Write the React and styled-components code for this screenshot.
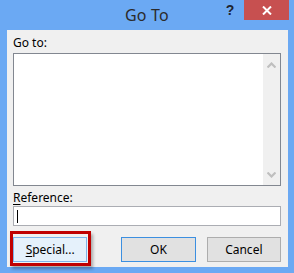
import React from "react";
import styled, { createGlobalStyle } from "styled-components";

const Global = createGlobalStyle`
  html, body { margin: 0; padding: 0; background: #6ba9f3; }
  body { font-family: "Noto Sans", "Open Sans", sans-serif; }
`;

const Window = styled.div`
  width: 294px;
  height: 273px;
  box-sizing: border-box;
  background: #6ba9f3;
  display: flex;
  flex-direction: column;
  padding: 0 6px 6px 7px;
`;

const TitleBar = styled.div`
  height: 30px;
  margin: 0 -6px 0 -7px;
  display: grid;
  grid-template-columns: 1fr auto 1fr;
  align-items: start;
`;

const Title = styled.div`
  grid-column: 2;
  font-size: 16px;
  line-height: 30px;
  color: #2b2b2b;
  letter-spacing: 0.2px;
`;

const Controls = styled.div`
  grid-column: 3;
  justify-self: end;
  display: flex;
  margin-right: 5px;
`;

const HelpButton = styled.div`
  width: 28px;
  height: 20px;
  display: flex;
  align-items: center;
  justify-content: center;
  font-family: "Liberation Sans", Arial, sans-serif;
  font-weight: bold;
  font-size: 14px;
  color: #1e2430;
`;

const CloseButton = styled.div`
  width: 45px;
  height: 20px;
  background: #c75050;
  display: flex;
  align-items: center;
  justify-content: center;
`;

const Content = styled.div`
  flex: 1;
  background: #f0f0f0;
  display: flex;
  flex-direction: column;
  padding: 5px 7px 0 6px;
  font-size: 12px;
  color: #000;
`;

const Label = styled.div`
  line-height: 15px;
  height: 15px;
  margin-top: ${(p) => p.$top || 0}px;
  margin-bottom: ${(p) => p.$bottom || 0}px;
`;

const Access = styled.span`
  text-decoration: underline;
  text-underline-offset: 2px;
`;

const ListBox = styled.div`
  height: 133px;
  box-sizing: border-box;
  border: 1px solid #828790;
  background: #fff;
  display: flex;
  justify-content: flex-end;
`;

const ScrollBar = styled.div`
  width: 17px;
  background: #f0f0f0;
  display: flex;
  flex-direction: column;
  justify-content: space-between;
  align-items: center;
  padding: 8px 0 7px;
`;

const Input = styled.div`
  height: 20px;
  box-sizing: border-box;
  border: 1px solid #abadb3;
  background: #fff;
  display: flex;
  align-items: center;
  padding-left: 3px;
`;

const Caret = styled.div`
  width: 1px;
  height: 13px;
  background: #000;
`;

const ButtonRow = styled.div`
  margin-top: 11px;
  display: flex;
  align-items: center;
`;

const Button = styled.div`
  position: relative;
  width: 75px;
  height: 25px;
  box-sizing: border-box;
  border: 1px solid ${(p) => (p.$focus ? "#7eb4ea" : p.$default ? "#3c8fe0" : "#adadad")};
  background: ${(p) => (p.$focus ? "#e5f1fb" : "#e1e1e1")};
  display: flex;
  align-items: center;
  justify-content: center;
  margin-left: ${(p) => p.$ml || 0}px;
`;

const Highlight = styled.div`
  position: absolute;
  left: -4px;
  right: -5px;
  top: -7px;
  bottom: -5px;
  border: 3px solid #c00000;
  box-shadow: 2px 3px 3px rgba(0, 0, 0, 0.3);
  pointer-events: none;
`;

const Chevron = ({ up }) => (
  <svg width="9" height="6" viewBox="0 0 9 6">
    <path
      d={up ? "M0.5 5.5 L4.5 1.5 L8.5 5.5" : "M0.5 0.5 L4.5 4.5 L8.5 0.5"}
      fill="none"
      stroke="#bfbfbf"
      strokeWidth="2.2"
    />
  </svg>
);

export default function App() {
  return (
    <>
      <Global />
      <Window>
        <TitleBar>
          <Title>Go To</Title>
          <Controls>
            <HelpButton>?</HelpButton>
            <CloseButton>
              <svg width="10" height="9" viewBox="0 0 10 9">
                <path d="M1 0.5 L9 8.5 M9 0.5 L1 8.5" stroke="#fff" strokeWidth="2" />
              </svg>
            </CloseButton>
          </Controls>
        </TitleBar>
        <Content>
          <Label $bottom={3}>Go to:</Label>
          <ListBox>
            <ScrollBar>
              <Chevron up />
              <Chevron />
            </ScrollBar>
          </ListBox>
          <Label $top={4} $bottom={1}>
            <Access>R</Access>eference:
          </Label>
          <Input>
            <Caret />
          </Input>
          <ButtonRow>
            <Button $focus>
              <span>
                <Access>S</Access>pecial...
              </span>
              <Highlight />
            </Button>
            <Button $default $ml={34}>OK</Button>
            <Button $ml={11}>Cancel</Button>
          </ButtonRow>
        </Content>
      </Window>
    </>
  );
}
